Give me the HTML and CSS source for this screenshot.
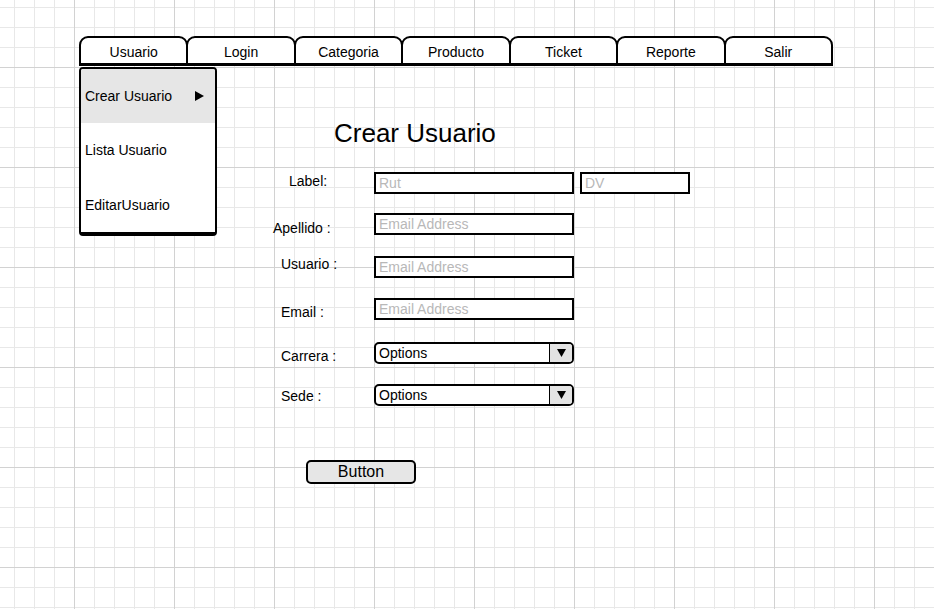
FILE: index.html
```html
<!DOCTYPE html>
<html lang="es">
<head>
<meta charset="utf-8">
<title>Crear Usuario</title>
<link rel="stylesheet" href="styles.css">
</head>
<body>
<div class="page">
  <nav class="tabs">
    <div class="tab tab-open">Usuario
      <div class="menu">
        <div class="menu-item menu-item-active"><span>Crear Usuario</span>
          <svg class="menu-arrow" width="9" height="10" viewBox="0 0 9 10"><polygon points="0,0 9,5 0,10" fill="#000"/></svg>
        </div>
        <div class="menu-item"><span>Lista Usuario</span></div>
        <div class="menu-item"><span>EditarUsuario</span></div>
      </div>
    </div>
    <div class="tab">Login</div>
    <div class="tab">Categoria</div>
    <div class="tab">Producto</div>
    <div class="tab">Ticket</div>
    <div class="tab">Reporte</div>
    <div class="tab">Salir</div>
  </nav>

  <main class="content">
    <h1 class="title">Crear Usuario</h1>
    <form class="form">
      <div class="row">
        <label class="lbl lbl-label">Label:</label>
        <input class="field" type="text" placeholder="Rut">
        <input class="field field-dv" type="text" placeholder="DV">
      </div>
      <div class="row row-tight">
        <label class="lbl lbl-apellido">Apellido :</label>
        <input class="field" type="text" placeholder="Email Address">
      </div>
      <div class="row row-loose">
        <label class="lbl lbl-usuario">Usuario :</label>
        <input class="field" type="text" placeholder="Email Address">
      </div>
      <div class="row">
        <label class="lbl lbl-email">Email :</label>
        <input class="field" type="text" placeholder="Email Address">
      </div>
      <div class="row row-wide">
        <label class="lbl lbl-carrera">Carrera :</label>
        <div class="select"><span class="select-text">Options</span>
          <span class="select-btn"><svg width="9" height="8" viewBox="0 0 9 8"><polygon points="0,0 9,0 4.5,8" fill="#000"/></svg></span>
        </div>
      </div>
      <div class="row">
        <label class="lbl lbl-sede">Sede :</label>
        <div class="select"><span class="select-text">Options</span>
          <span class="select-btn"><svg width="9" height="8" viewBox="0 0 9 8"><polygon points="0,0 9,0 4.5,8" fill="#000"/></svg></span>
        </div>
      </div>
    </form>
    <div class="actions">
      <button class="btn" type="button">Button</button>
    </div>
  </main>
</div>
</body>
</html>
```

FILE: styles.css
```css
html, body {
  margin: 0;
  padding: 0;
}

body {
  width: 934px;
  min-height: 609px;
  font-family: "Liberation Sans", Arial, sans-serif;
  color: #000;
  background-color: #fff;
  background-image:
    linear-gradient(to right, #d2d2d2 1px, transparent 1px),
    linear-gradient(to bottom, #d2d2d2 1px, transparent 1px),
    linear-gradient(to right, #e8e8e8 1px, transparent 1px),
    linear-gradient(to bottom, #e8e8e8 1px, transparent 1px);
  background-size: 100px 100px, 100px 100px, 20px 20px, 20px 20px;
  background-position: 74px 67px, 74px 67px, 14px 7px, 14px 7px;
  overflow: hidden;
}

.page {
  padding: 36px 0 0 79px;
}

/* Tabs */
.tabs {
  display: flex;
  width: 754px;
  height: 30px;
}

.tab {
  position: relative;
  flex: 1 1 0;
  box-sizing: border-box;
  height: 30px;
  margin-left: -2px;
  border: 2px solid #000;
  border-bottom-width: 3px;
  border-radius: 9px 9px 0 0;
  background: #fff;
  font-size: 14px;
  line-height: 16px;
  padding-top: 6px;
  text-align: center;
}

.tab:first-child {
  margin-left: 0;
}

.tab-open {
  z-index: 2;
}

/* Dropdown menu */
.menu {
  position: absolute;
  top: calc(100% + 4px);
  left: -2px;
  box-sizing: border-box;
  width: 138px;
  height: 169px;
  display: flex;
  flex-direction: column;
  border: 2px solid #000;
  border-bottom-width: 4px;
  border-radius: 4px;
  background: #fff;
  overflow: hidden;
  text-align: left;
}

.menu-item {
  flex: 1 1 0;
  display: flex;
  align-items: center;
  justify-content: space-between;
  padding: 0 11px 0 4px;
  font-size: 14px;
}

.menu-item-active {
  background: #e6e6e6;
}

.menu-arrow {
  display: block;
}

/* Content */
.title {
  margin: 52px 0 0 255px;
  font-size: 26px;
  font-weight: normal;
  line-height: 30px;
}

.form {
  display: flex;
  flex-direction: column;
  gap: 20px;
  margin: 24px 0 0 194px;
}

.row {
  display: flex;
  align-items: flex-start;
  height: 22px;
}

.row-tight { margin-top: -1px; }
.row-loose { margin-top: 1px; }
.row-wide { margin-top: 2px; }

.lbl {
  box-sizing: border-box;
  width: 101px;
  font-size: 14px;
  line-height: 16px;
}

.lbl-label { padding: 1px 0 0 16px; }
.lbl-apellido { padding: 7px 0 0 0; }
.lbl-usuario { padding: 0 0 0 8px; }
.lbl-email { padding: 6px 0 0 8px; }
.lbl-carrera { padding: 6px 0 0 8px; }
.lbl-sede { padding: 4px 0 0 8px; }

.field {
  box-sizing: border-box;
  width: 200px;
  height: 22px;
  margin: 0;
  padding: 0 3px;
  border: 2px solid #000;
  border-radius: 0;
  background: #fff;
  font-family: "Liberation Sans", Arial, sans-serif;
  font-size: 14px;
  color: #000;
  outline: none;
}

.field::placeholder {
  color: #b8b8b8;
  opacity: 1;
}

.field-dv {
  width: 110px;
  margin-left: 6px;
}

.select {
  box-sizing: border-box;
  display: flex;
  width: 200px;
  height: 22px;
  border: 2px solid #000;
  border-radius: 5px;
  background: #fff;
  overflow: hidden;
}

.select-text {
  flex: 1 1 auto;
  padding-left: 3px;
  font-size: 14px;
  line-height: 18px;
}

.select-btn {
  display: flex;
  align-items: center;
  justify-content: center;
  width: 22px;
  border-left: 1px solid #000;
  background: #e3e3e3;
}

.select-btn svg {
  display: block;
}

.actions {
  margin: 54px 0 0 227px;
}

.btn {
  box-sizing: border-box;
  display: block;
  width: 110px;
  height: 24px;
  margin: 0;
  padding: 0;
  border: 2px solid #000;
  border-radius: 5px;
  background: #e6e6e6;
  font-family: "Liberation Sans", Arial, sans-serif;
  font-size: 16px;
  line-height: 18px;
  color: #000;
}
```
